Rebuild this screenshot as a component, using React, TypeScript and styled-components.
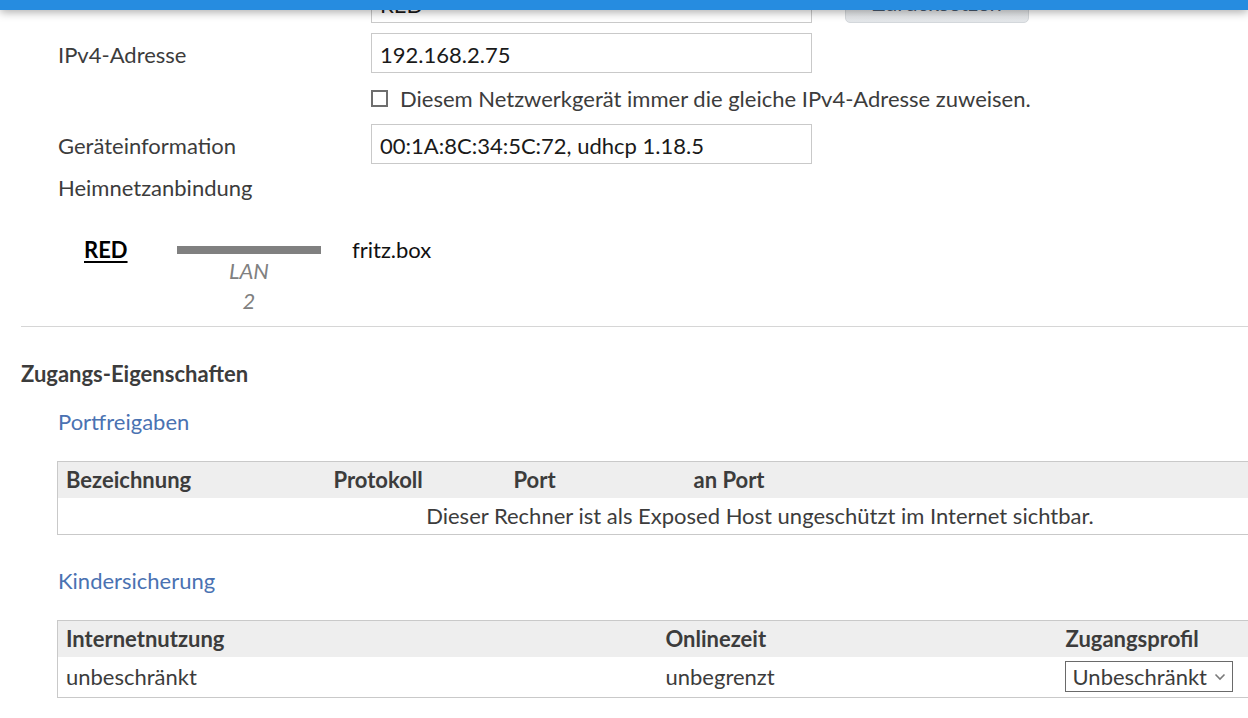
import React from "react";
import styled, { createGlobalStyle } from "styled-components";

const Global = createGlobalStyle`
  html, body { margin: 0; padding: 0; background: #fff; overflow: hidden; }
  body { font-family: "Lato", "Noto Sans", sans-serif; font-size: 22px; color: #3c3c3c; }
  * { box-sizing: border-box; }
`;

const TopBar = styled.div`
  position: fixed;
  top: 0; left: 0; right: 0;
  height: 10px;
  background: #268ce0;
  box-shadow: 0 2px 10px rgba(0,0,0,0.35);
  z-index: 5;
`;

const Page = styled.div`
  padding-left: 21px;
  width: 1500px;
`;

const FormRow = styled.div<{ $mt: number; $h?: number }>`
  display: grid;
  grid-template-columns: 313px 441px auto;
  align-items: center;
  padding-left: 37px;
  margin-top: ${p => p.$mt}px;
  height: ${p => p.$h ?? 40}px;
`;

const Label = styled.div`
  color: #3c3c3c;
  line-height: 24px;
  padding-top: 3px;
`;

const TextInput = styled.div`
  height: 40px;
  border: 1px solid #c9c9c9;
  background: #fff;
  padding: 2px 8px 0;
  display: flex;
  align-items: center;
  color: #1a1a1a;
`;

const ResetButton = styled.div`
  margin-left: 33px;
  width: 184px;
  height: 40px;
  border-radius: 5px;
  background: linear-gradient(#eceef0, #e3e6e9);
  border: 1px solid #d3d7db;
  color: #4a5a70;
  display: flex;
  align-items: flex-end;
  justify-content: center;
  padding-bottom: 6px;
`;

const CheckLine = styled.label`
  grid-column: 2 / 4;
  display: flex;
  align-items: center;
  gap: 12px;
  white-space: nowrap;
  color: #3c3c3c;
`;

const Box = styled.span`
  width: 17px;
  height: 17px;
  border: 2px solid #6e6e6e;
  background: #fff;
  display: inline-block;
`;

const Diagram = styled.div`
  display: grid;
  grid-template-columns: 62px 144px auto;
  column-gap: 31px;
  padding-left: 63px;
  margin-top: 38px;
`;

const DeviceName = styled.div`
  font-weight: 700;
  color: #000;
  text-decoration: underline;
  text-underline-offset: 3px;
  line-height: 24px;
`;

const Link = styled.div`
  display: flex;
  flex-direction: column;
  align-items: center;
`;

const Cable = styled.div`
  width: 144px;
  height: 8px;
  background: #808080;
  margin-top: 8px;
`;

const CableLabel = styled.div`
  font-style: italic;
  color: #808080;
  line-height: 30px;
  padding-top: 2px;
  margin-bottom: -2px;
`;

const Remote = styled.div`
  color: #111;
  line-height: 24px;
`;

const Rule = styled.hr`
  border: 0;
  border-top: 1px solid #d6d6d6;
  margin: 12px 0 0 0;
`;

const SectionTitle = styled.h2`
  margin: 34px 0 0 0;
  font-size: 22px;
  font-weight: 700;
  color: #3c3c3c;
  line-height: 26px;
`;

const SubTitle = styled.h3<{ $mt: number }>`
  margin: ${p => p.$mt}px 0 0 37px;
  font-size: 22px;
  font-weight: 400;
  color: #4a72b2;
  line-height: 26px;
`;

const Table = styled.table<{ $mt: number }>`
  margin: ${p => p.$mt}px 0 0 36px;
  width: 1406px;
  border-collapse: collapse;
  border: 1px solid #c9c9c9;
  table-layout: fixed;
`;

const Th = styled.th<{ $w?: number }>`
  background: #eeeeee;
  text-align: left;
  font-weight: 700;
  color: #3c3c3c;
  height: 36px;
  padding: 0 8px;
  width: ${p => (p.$w ? p.$w + "px" : "auto")};
  white-space: nowrap;
`;

const Td = styled.td<{ $h?: number; $center?: boolean }>`
  height: ${p => p.$h ?? 37}px;
  padding: 0 8px;
  color: #3c3c3c;
  text-align: ${p => (p.$center ? "center" : "left")};
  white-space: nowrap;
`;

const Select = styled.div`
  width: 168px;
  height: 31px;
  margin-left: -1px;
  border: 1.5px solid #6a6a6a;
  display: flex;
  align-items: center;
  justify-content: space-between;
  padding: 0 6px 0 7px;
  color: #3c3c3c;
`;

const Chevron = () => (
  <svg width="12" height="8" viewBox="0 0 12 8">
    <path d="M1.5 1.5 L6 6 L10.5 1.5" fill="none" stroke="#7a7a7a" strokeWidth="1.6" />
  </svg>
);

export default function App() {
  return (
    <>
      <Global />
      <TopBar />
      <Page>
        <FormRow $mt={-17}>
          <Label />
          <TextInput>RED</TextInput>
          <ResetButton>Zurücksetzen</ResetButton>
        </FormRow>
        <FormRow $mt={10}>
          <Label>IPv4-Adresse</Label>
          <TextInput>192.168.2.75</TextInput>
        </FormRow>
        <FormRow $mt={10} $h={30}>
          <Label />
          <CheckLine>
            <Box />
            Diesem Netzwerkgerät immer die gleiche IPv4-Adresse zuweisen.
          </CheckLine>
        </FormRow>
        <FormRow $mt={11}>
          <Label>Geräteinformation</Label>
          <TextInput>00:1A:8C:34:5C:72, udhcp 1.18.5</TextInput>
        </FormRow>
        <FormRow $mt={9} $h={27}>
          <Label>Heimnetzanbindung</Label>
        </FormRow>
        <Diagram>
          <DeviceName>RED</DeviceName>
          <Link>
            <Cable />
            <CableLabel>LAN</CableLabel>
            <CableLabel>2</CableLabel>
          </Link>
          <Remote>fritz.box</Remote>
        </Diagram>
        <Rule />
        <SectionTitle>Zugangs-Eigenschaften</SectionTitle>
        <SubTitle $mt={22}>Portfreigaben</SubTitle>
        <Table $mt={26}>
          <thead>
            <tr>
              <Th $w={268}>Bezeichnung</Th>
              <Th $w={180}>Protokoll</Th>
              <Th $w={180}>Port</Th>
              <Th>an Port</Th>
            </tr>
          </thead>
          <tbody>
            <tr>
              <Td $center colSpan={4}>
                Dieser Rechner ist als Exposed Host ungeschützt im Internet sichtbar.
              </Td>
            </tr>
          </tbody>
        </Table>
        <SubTitle $mt={33}>Kindersicherung</SubTitle>
        <Table $mt={26}>
          <thead>
            <tr>
              <Th $w={600}>Internetnutzung</Th>
              <Th $w={400}>Onlinezeit</Th>
              <Th>Zugangsprofil</Th>
            </tr>
          </thead>
          <tbody>
            <tr>
              <Td $h={41}>unbeschränkt</Td>
              <Td $h={41}>unbegrenzt</Td>
              <Td $h={41}>
                <Select>
                  Unbeschränkt
                  <Chevron />
                </Select>
              </Td>
            </tr>
          </tbody>
        </Table>
      </Page>
    </>
  );
}
